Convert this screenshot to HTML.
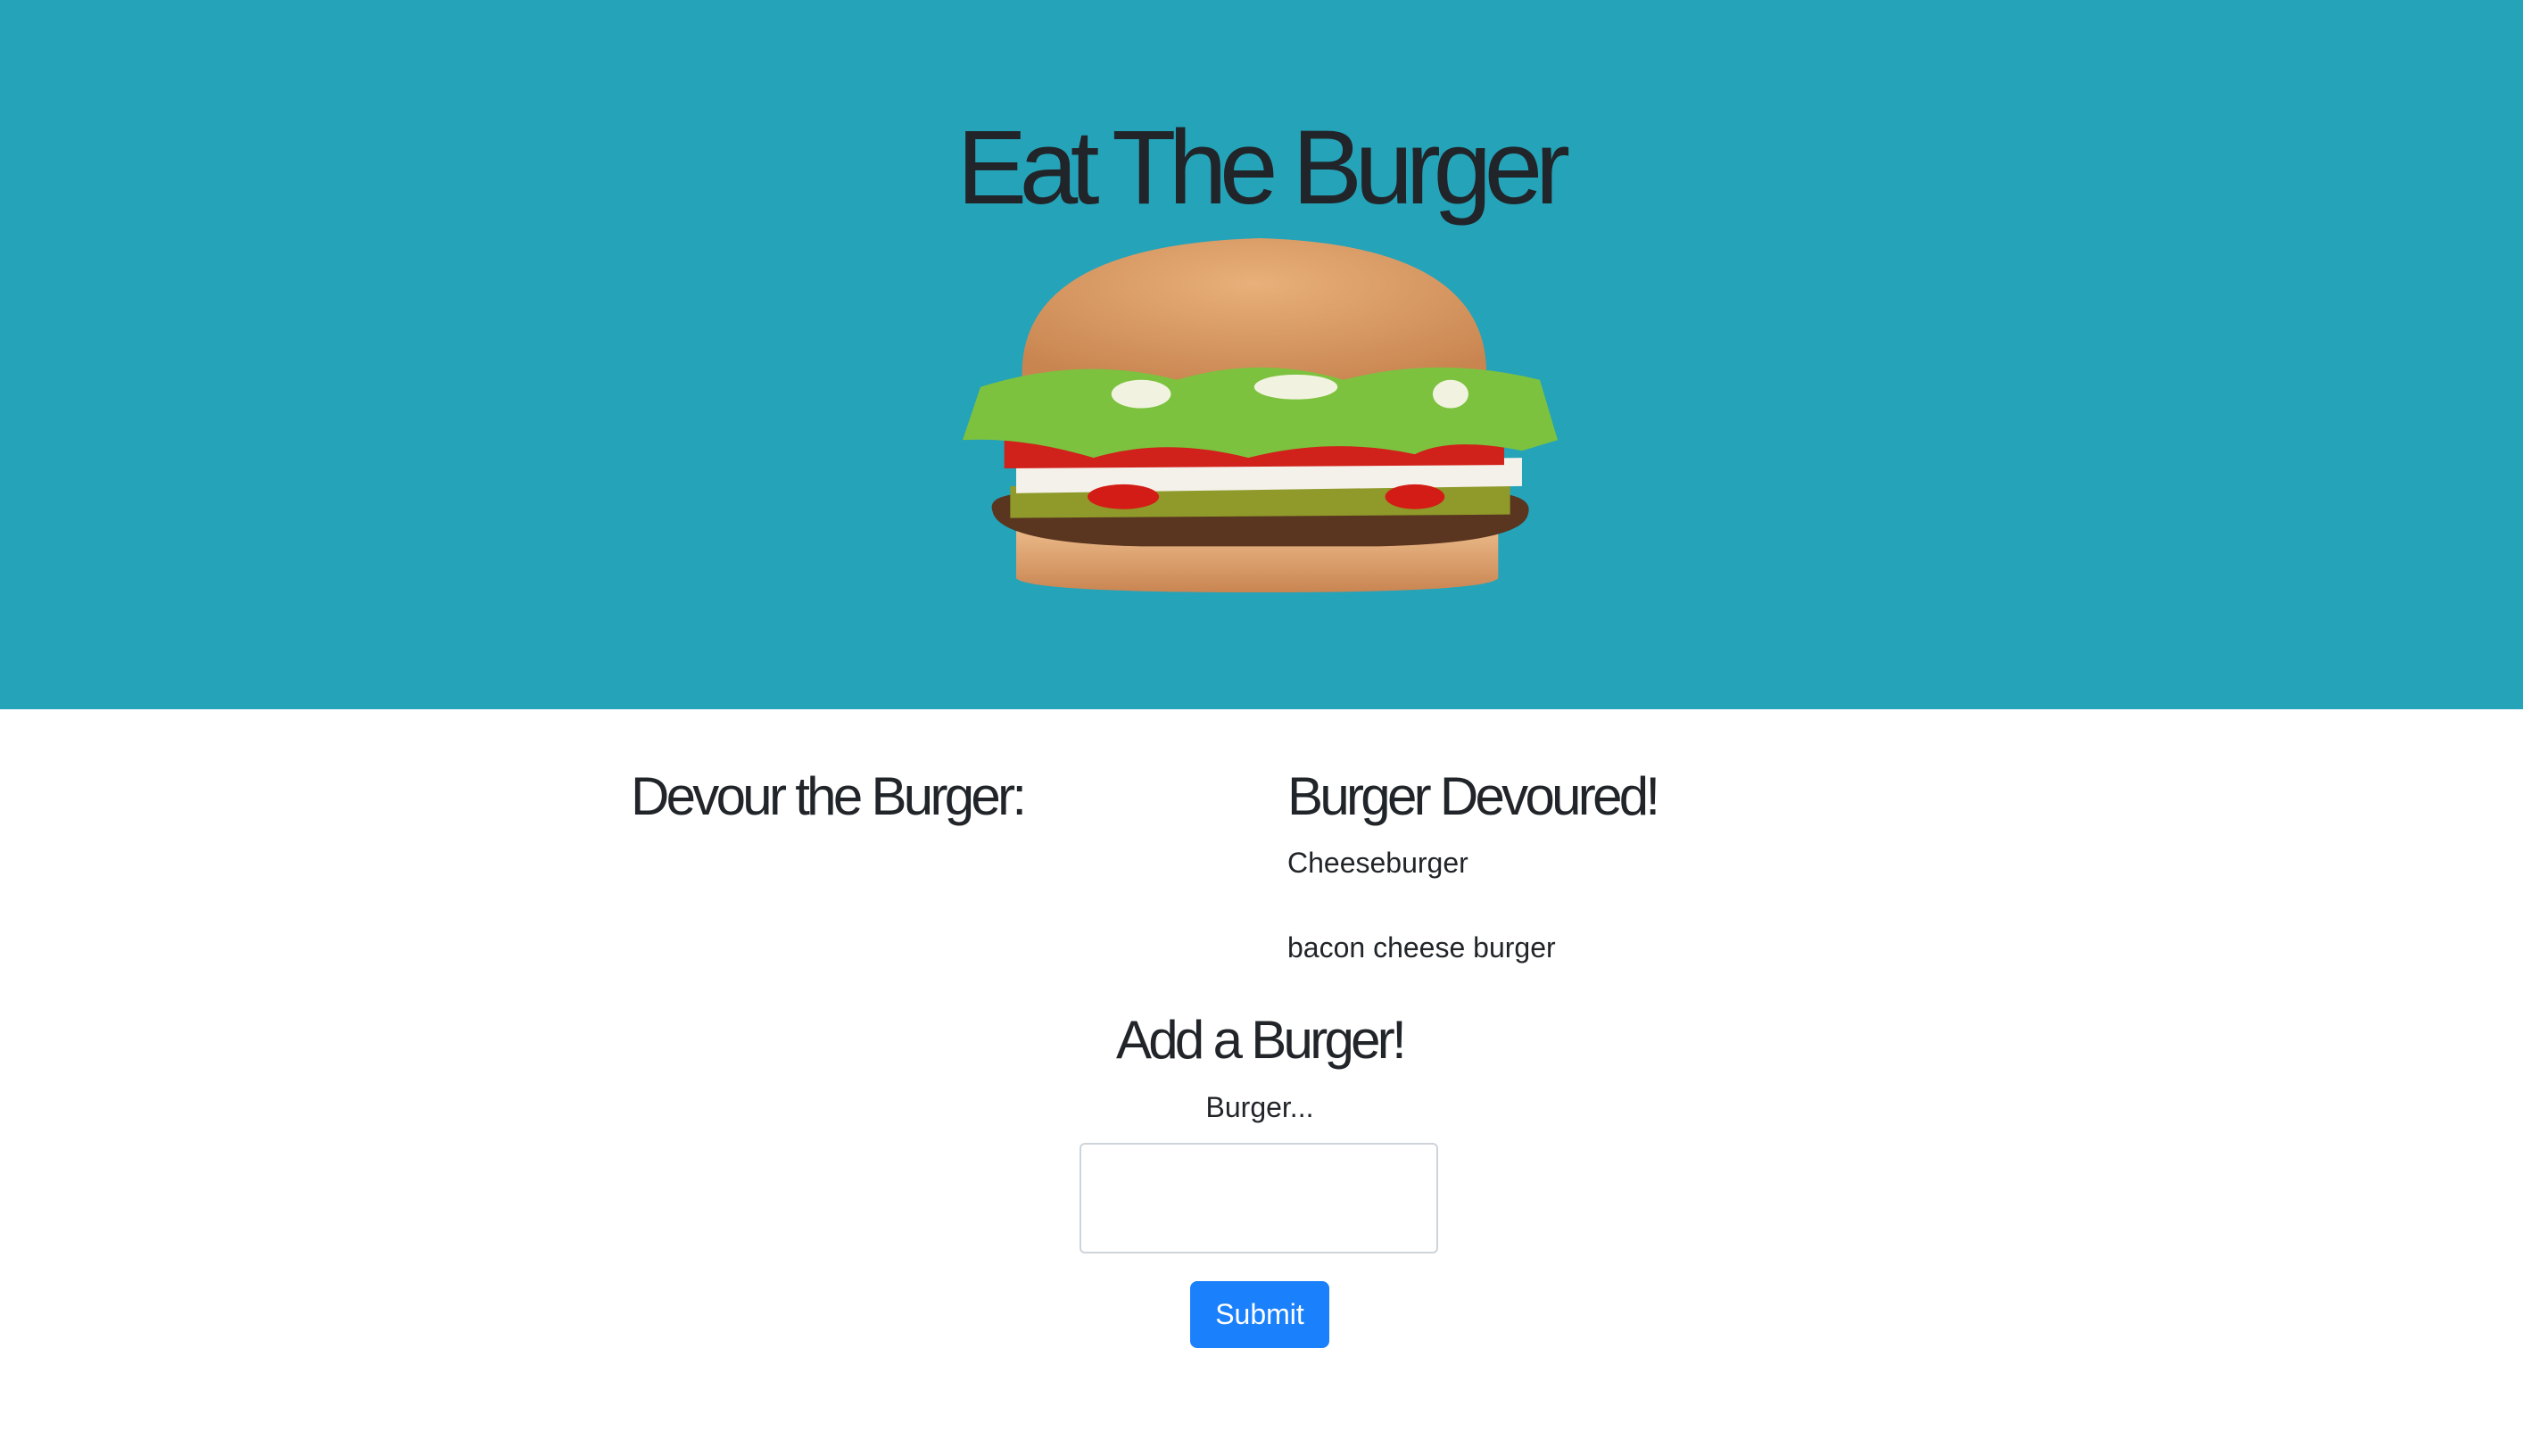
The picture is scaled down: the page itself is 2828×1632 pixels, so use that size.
<!DOCTYPE html>
<html><head><meta charset="utf-8"><style>
html,body{margin:0;padding:0;width:2828px;height:1632px;background:#fff;overflow:hidden;font-family:"Liberation Sans",Arial,sans-serif;color:#212529}
.hdr{position:absolute;left:0;top:0;width:2828px;height:795px;background:#24a3b9}
.t{position:absolute;line-height:1;white-space:nowrap}
.c{transform:translateX(-50%)}
</style></head><body>
<div class="hdr"></div>
<div class="t c" style="left:1412px;top:129px;font-size:118px;letter-spacing:-8.5px">Eat The Burger</div>
<svg style="position:absolute;left:1079px;top:267px" width="667" height="397" viewBox="0 0 1000 1000" preserveAspectRatio="none">
<defs>
<radialGradient id="bun" cx="50%" cy="30%" r="70%"><stop offset="0" stop-color="#e8b07a"/><stop offset="1" stop-color="#c98550"/></radialGradient>
<linearGradient id="bb" x1="0" y1="0" x2="0" y2="1"><stop offset="0" stop-color="#edbd8c"/><stop offset="1" stop-color="#c98552"/></linearGradient>
</defs>
<path d="M90 920 L90 830 Q90 810 120 810 L880 810 Q900 810 900 830 L900 960 Q880 1000 500 1000 Q110 1000 90 960Z" fill="url(#bb)"/>
<path d="M50 770 Q40 720 120 720 L900 720 Q960 730 950 780 Q940 860 700 870 L300 870 Q60 860 50 770Z" fill="#5a3520"/>
<path d="M80 700 L920 690 L920 780 L80 790Z" fill="#8f9a2a"/>
<path d="M90 640 L940 620 L940 700 L90 720Z" fill="#f4f1ea"/>
<path d="M70 510 L910 500 L910 640 L70 650Z" fill="#d0211a"/>
<path d="M100 400 Q90 20 500 0 Q890 20 880 400 L880 430 L100 430Z" fill="url(#bun)"/>
<path d="M0 570 L30 420 Q200 330 360 400 Q500 330 640 400 Q800 330 970 400 L1000 570 L940 600 Q820 560 760 610 Q620 560 480 620 Q340 560 220 620 Q100 560 0 570Z" fill="#7cc23e"/>
<ellipse cx="300" cy="440" rx="50" ry="40" fill="#f1f3e0"/>
<ellipse cx="560" cy="420" rx="70" ry="35" fill="#f1f3e0"/>
<ellipse cx="820" cy="440" rx="30" ry="40" fill="#f1f3e0"/>
<ellipse cx="270" cy="730" rx="60" ry="35" fill="#d31c16"/>
<ellipse cx="760" cy="730" rx="50" ry="35" fill="#d31c16"/>
</svg>
<div class="t" style="left:707px;top:863px;font-size:60px;letter-spacing:-3.7px">Devour the Burger:</div>
<div class="t" style="left:1443px;top:863px;font-size:60px;letter-spacing:-3.7px">Burger Devoured!</div>
<div class="t" style="left:1443px;top:951px;font-size:32px">Cheeseburger</div>
<div class="t" style="left:1443px;top:1046px;font-size:32px">bacon cheese burger</div>
<div class="t c" style="left:1412px;top:1136px;font-size:60px;letter-spacing:-3.7px">Add a Burger!</div>
<div class="t c" style="left:1412px;top:1225px;font-size:32px">Burger...</div>
<div style="position:absolute;left:1210px;top:1281px;width:398px;height:120px;border:2px solid #ced4da;border-radius:6px;background:#fff"></div>
<div style="position:absolute;left:1334px;top:1436px;width:156px;height:75px;background:#1a80fb;border-radius:8px;color:#fff;font-size:32px;line-height:75px;text-align:center">Submit</div>
</body></html>
